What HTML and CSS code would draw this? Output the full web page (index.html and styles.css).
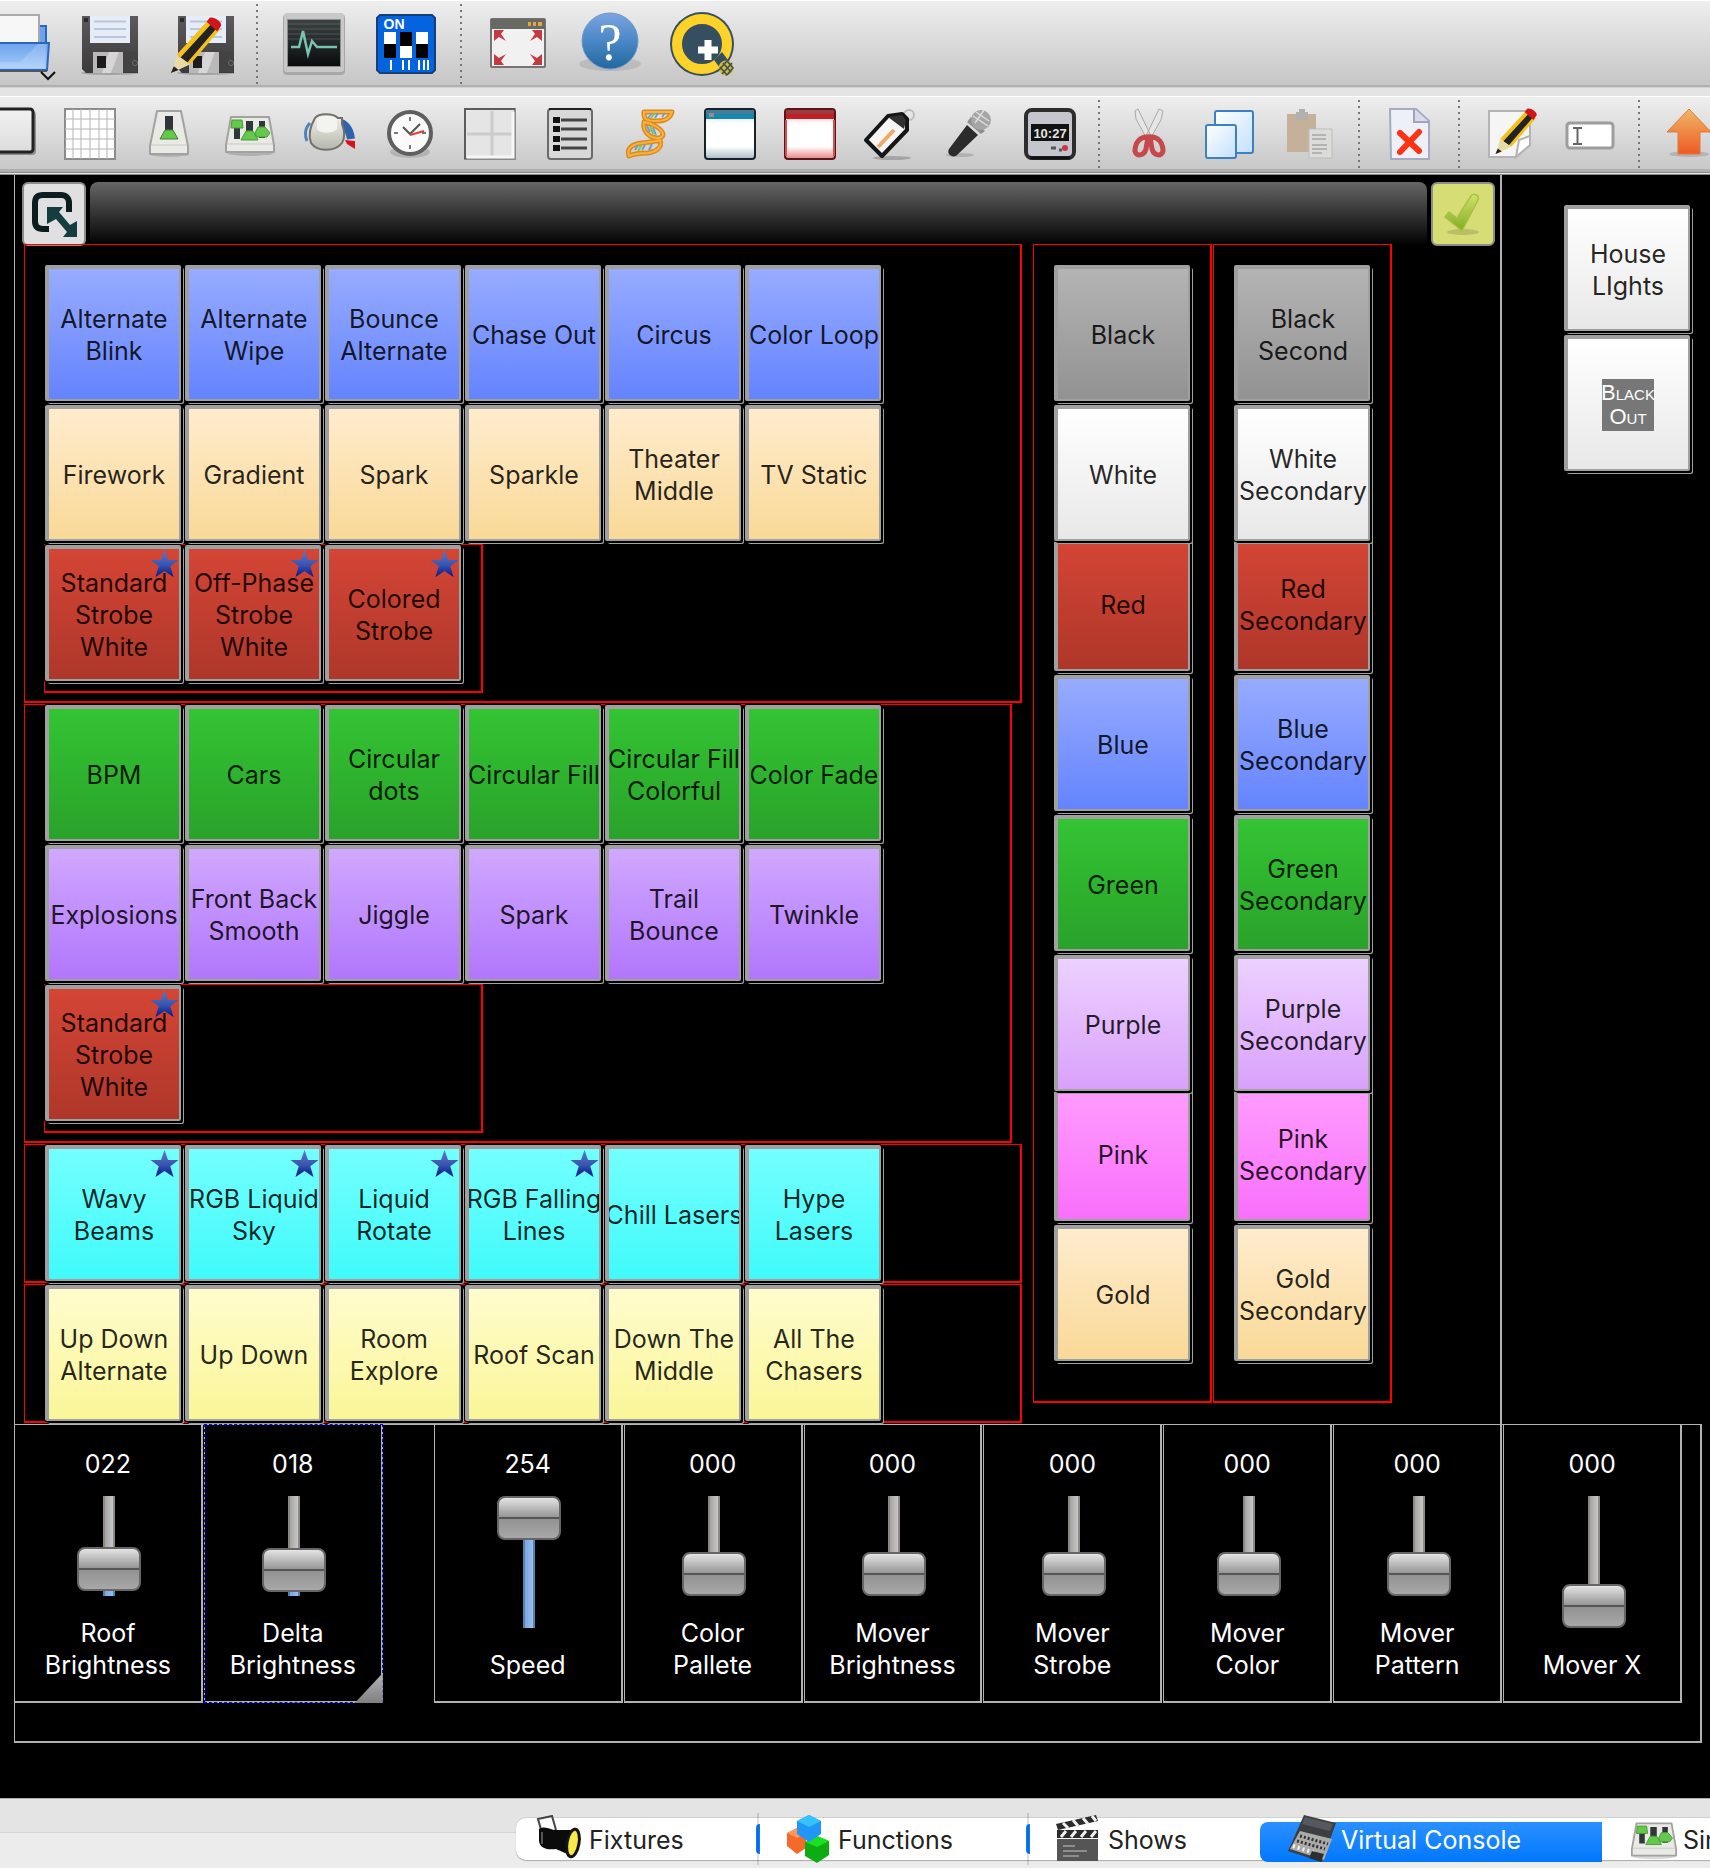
FILE: index.html
```html
<!DOCTYPE html>
<html lang="en">
<head>
<meta charset="utf-8">
<meta name="viewport" content="width=device-width, initial-scale=1">
<title>Virtual Console</title>
<link rel="stylesheet" href="styles.css">
</head>
<body>
<svg class="defs" aria-hidden="true">
  <defs>
    <linearGradient id="g-star" x1="0" y1="0" x2="0" y2="1"><stop offset="0" stop-color="#5b78cc"/><stop offset=".55" stop-color="#3a55b0"/><stop offset="1" stop-color="#00168a"/></linearGradient>
    <linearGradient id="g-dark" x1="0" y1="0" x2="0" y2="1"><stop offset="0" stop-color="#5c5a5c"/><stop offset="1" stop-color="#3c393b"/></linearGradient>
    <linearGradient id="g-folder" x1="0" y1="0" x2="0" y2="1"><stop offset="0" stop-color="#6ea2ec"/><stop offset="1" stop-color="#a4cdfb"/></linearGradient>
    <linearGradient id="g-help" x1="0" y1="0" x2="0" y2="1"><stop offset="0" stop-color="#7ba4e2"/><stop offset=".5" stop-color="#4a87c6"/><stop offset="1" stop-color="#22689f"/></linearGradient>
    <linearGradient id="g-up" x1="0" y1="0" x2="0" y2="1"><stop offset="0" stop-color="#efb766"/><stop offset="1" stop-color="#ee5a24"/></linearGradient>
    <linearGradient id="g-sheet" x1="0" y1="0" x2="1" y2="1"><stop offset="0" stop-color="#fff"/><stop offset="1" stop-color="#c3e0ff"/></linearGradient>
    <linearGradient id="g-knob" x1="0" y1="0" x2="0" y2="1"><stop offset="0" stop-color="#f4f4f0"/><stop offset="1" stop-color="#b4b7aa"/></linearGradient>
    <linearGradient id="g-screen" x1="0" y1="0" x2="0" y2="1"><stop offset="0" stop-color="#3c4242"/><stop offset="1" stop-color="#090c0c"/></linearGradient>
    <linearGradient id="g-check" x1="0" y1="0" x2="0" y2="1"><stop offset="0" stop-color="#cfe36a"/><stop offset="1" stop-color="#7fae1f"/></linearGradient>
    <linearGradient id="g-face" x1="0" y1="0" x2="0" y2="1"><stop offset="0" stop-color="#f2f2f2"/><stop offset="1" stop-color="#dcdcdc"/></linearGradient>
    <linearGradient id="g-win" x1="0" y1="0" x2="0" y2="1"><stop offset="0" stop-color="#c9d2d8"/><stop offset=".3" stop-color="#fff"/><stop offset=".75" stop-color="#fff"/><stop offset="1" stop-color="#aab9c2"/></linearGradient>
    <linearGradient id="g-winred" x1="0" y1="0" x2="0" y2="1"><stop offset="0" stop-color="#f3a7a7"/><stop offset=".3" stop-color="#fff"/><stop offset=".75" stop-color="#fff"/><stop offset="1" stop-color="#e78383"/></linearGradient>
    <symbol id="star" viewBox="0 0 28 28"><path d="M14.500 0 18 10h10.500l-8.200 6.300L23.500 27l-9-6-9 6 3.200-10.700L.5 10H11z" fill="url(#g-star)"/></symbol>
    <symbol id="floppy" viewBox="0 0 64 64">
      <ellipse cx="32" cy="61" rx="29" ry="2" fill="#00000033"/>
      <path d="M4 4h56v57H8l-4-4z" fill="url(#g-dark)"/>
      <rect x="6" y="6" width="4" height="4" fill="#2c2a2b"/>
      <rect x="12" y="4" width="40" height="27" fill="#e6edf6"/>
      <path d="M16 9.500h32M16 17h32M16 25h32" stroke="#b5c8de" stroke-width="2"/>
      <rect x="15" y="40" width="30" height="21" fill="#b9b9b9"/>
      <path d="M31 40h10L33 61h-9z" fill="#d6d6d6"/>
      <rect x="19" y="44" width="9" height="12" fill="#1d1b1c"/>
      <path d="M45 40h14v20H45z" fill="#454244"/>
      <circle cx="57" cy="51" r="2.500" fill="none" stroke="#6b696a"/>
    </symbol>
    <symbol id="pencil" viewBox="0 0 52 58">
      <path d="M38 4 51 13 20 49 6 39z" fill="#f2c11c"/>
      <path d="M42 7 48 11 17 47 10 42z" fill="#232323"/>
      <path d="M37 5 40 1c4-2 13 4 12 8l-4 6z" fill="#d1161b"/>
      <path d="M6 39 20 49 1 58z" fill="#e9d9a4"/>
      <path d="M3 51 8 55 0 58z" fill="#26221c"/>
    </symbol>
    <symbol id="mixer" viewBox="0 0 52 52">
      <ellipse cx="26" cy="45" rx="23" ry="3" fill="#00000026"/>
      <path d="M7 9h38l5 28v7H2v-7z" fill="#e9e9e6" stroke="#a2a29f" stroke-width="2" stroke-linejoin="round"/>
      <path d="M3 36h46" stroke="#c9c9c6"/>
      <path d="M10 14h6v17h-6zM22 13h7v18h-7zM35 13h6v17h-6z" fill="#30363a"/>
      <path d="M8 12h10l1 8H7zM22 23h7l5 9H17zM34 19h7l5 6-3 4H33l-2-4z" fill="#62c94a" stroke="#4a9c38"/>
    </symbol>
  </defs>
</svg>

<header class="toolbar toolbar-main" role="toolbar" aria-label="Main">
  <button class="tool" aria-label="Open">
    <svg class="icon" viewBox="0 0 64 64">
      <path d="M30 14h30v17H30z" fill="#6ca3ee" stroke="#2b66bd" stroke-width="2"/>
      <path d="M-6 3h59v28H-6z" fill="#f7f7f7" stroke="#a9a9a9" stroke-width="2"/>
      <path d="M-6 31h69l-2 27H-6z" fill="url(#g-folder)" stroke="#2a66c0" stroke-width="2"/>
      <path d="M14 50h20L52 32h8l-1 24H0z" fill="#ffffff2b"/>
      <path d="M-6 59h67" stroke="#4c5766" stroke-width="2"/>
      <path d="m55 60 7 7 7-7" fill="none" stroke="#111" stroke-width="2"/>
    </svg>
  </button>
  <button class="tool" aria-label="Save"><svg class="icon"><use href="#floppy"/></svg></button>
  <button class="tool" aria-label="Save as">
    <svg class="icon" viewBox="0 0 64 64"><use href="#floppy" x="4" width="64" height="64"/><use href="#pencil" x="0" y="5" width="52" height="56"/></svg>
  </button>
  <span class="separator"></span>
  <button class="tool" aria-label="DMX monitor">
    <svg class="icon" viewBox="0 0 64 64">
      <rect x="1" y="2" width="62" height="61" rx="4" fill="#a8a8a8"/>
      <rect x="2" y="1" width="60" height="59" rx="3" fill="#c8c8c8"/>
      <rect x="5" y="7" width="54" height="48" fill="#8c8c8c"/>
      <rect x="6" y="8" width="52" height="46" fill="url(#g-screen)"/>
      <path d="M6 12h52M6 17h52M6 22h52M6 27h52" stroke="#ffffff14" stroke-width="2"/>
      <path d="M9 35h8l4-16 5 23 4-13 5 6h20" fill="none" stroke="#79c3ae" stroke-width="2.500"/>
    </svg>
  </button>
  <button class="tool" aria-label="DMX address tool">
    <svg class="icon" viewBox="0 0 64 64">
      <path d="M6 3h52l3 3v52l-3 3H6l-3-3V6z" fill="#0464e0" stroke="#173f77" stroke-width="2"/>
      <text x="20" y="17" class="dip-label" text-anchor="middle">ON</text>
      <path d="M10 20h12v12H10zM26 34h12v12H26zM42 20h12v12H42z" fill="#fff"/>
      <path d="M10 32h12v14H10zM26 20h12v14H26zM42 32h12v14H42z" fill="#000"/>
      <path d="M17 48v10M29 48v10M35 48v10M45 48v10M50 48v10M54 48v10" stroke="#fff" stroke-width="2"/>
    </svg>
  </button>
  <span class="separator"></span>
  <button class="tool" aria-label="Full screen">
    <svg class="icon" viewBox="0 0 64 64">
      <rect x="5" y="7" width="54" height="48" rx="1" fill="#f1f1f1" stroke="#747470" stroke-width="2"/>
      <path d="M5 7h54v10H5z" fill="#686864"/>
      <path d="M42 12h3M47 12h3M52 12h4" stroke="#e9a63c" stroke-width="4"/>
      <g fill="#c23b40"><path d="M8 18h10l-3 4 5 7-7-4-5 4z"/><path d="M56 18H46l3 4-5 7 7-4 5 4z"/><path d="M8 53h10l-3-4 5-7-7 4-5-4z"/><path d="M56 53H46l3-4-5-7 7 4 5-4z"/></g>
    </svg>
  </button>
  <button class="tool" aria-label="Help">
    <svg class="icon" viewBox="0 0 64 64">
      <ellipse cx="32" cy="52" rx="31" ry="7" fill="#00000018"/>
      <circle cx="32" cy="29" r="28" fill="url(#g-help)" stroke="#6f97c8"/>
      <text x="32" y="48" class="help-mark" text-anchor="middle">?</text>
    </svg>
  </button>
  <button class="tool" aria-label="About">
    <svg class="icon" viewBox="0 0 64 64">
      <circle cx="32" cy="32" r="32" fill="#354f60"/>
      <circle cx="32" cy="32" r="25" fill="none" stroke="#fdd32a" stroke-width="10"/>
      <path d="m44 48 8-8 12 16-8 8z" fill="#354f60"/>
      <path d="M38 28v20M28 38h20" stroke="#fff" stroke-width="7"/>
      <circle cx="56" cy="56" r="7.500" fill="#d9b92b"/>
      <path d="m50 55 7 8M53 51l8 9M57 49l6 7M49 58l8-9M52 62l10-11M57 63l6-7" stroke="#354f60" stroke-width="1.500"/>
    </svg>
  </button>
</header>

<div class="toolbar toolbar-widgets" role="toolbar" aria-label="Widgets">
  <button class="tool" aria-label="Add button"><svg class="icon" viewBox="0 0 52 52"><rect x="-2" y="3" width="54" height="44" rx="4" fill="#00000055"/><rect x="-4" y="1" width="53" height="43" rx="3" fill="url(#g-face)" stroke="#222" stroke-width="3"/></svg></button>
  <button class="tool" aria-label="Add button matrix"><svg class="icon" viewBox="0 0 52 52"><rect x="1" y="1" width="50" height="50" fill="#fff" stroke="#8c8c8c" stroke-width="2"/><path d="M9 1v50M17 1v50M26 1v50M35 1v50M43 1v50M1 11h50M1 21h50M1 31h50M1 41h50" stroke="#b4b4b4"/></svg></button>
  <button class="tool" aria-label="Add slider"><svg class="icon" viewBox="0 0 52 52"><ellipse cx="25" cy="46" rx="20" ry="3" fill="#00000026"/><path d="M13 3h24l7 35v8H6v-8z" fill="#e9e9e6" stroke="#a2a29f" stroke-width="2" stroke-linejoin="round"/><path d="M7 37h36" stroke="#c9c9c6"/><rect x="21" y="8" width="8" height="16" fill="#30343a"/><path d="M21 22h8l5 9H16z" fill="#62c94a" stroke="#4a7a40"/></svg></button>
  <button class="tool" aria-label="Add slider matrix"><svg class="icon"><use href="#mixer"/></svg></button>
  <button class="tool" aria-label="Add knob"><svg class="icon" viewBox="0 0 52 52"><path d="M6 15c-6 6-5 14-3 18" fill="none" stroke="#4d83bd" stroke-width="3"/><path d="M34 14c8 2 12 9 13 17" fill="none" stroke="#2f64ad" stroke-width="8"/><path d="m41 32 10 1v8l-8-5z" fill="#d6141a"/><path d="M11 10c4-5 18-5 23 0h4v6c3 8 3 14 0 19-7 9-25 9-31 0-3-8 0-18 4-25z" fill="url(#g-knob)" stroke="#6f716a" stroke-width="2"/><path d="M13 11c5-4 15-4 20 0v10c-4 5-17 5-20 0z" fill="#f3f3ef"/></svg></button>
  <button class="tool" aria-label="Add speed dial"><svg class="icon" viewBox="0 0 52 52"><ellipse cx="26" cy="44" rx="20" ry="6" fill="#00000022"/><circle cx="26" cy="25" r="21" fill="#fafafa" stroke="#5f5f5f" stroke-width="4"/><path d="M26 9v4M26 37v4M10 25h4M38 25h4" stroke="#777" stroke-width="2"/><path d="m19 19 7 7 10-10" fill="none" stroke="#555" stroke-width="2"/><path d="m26 27 14-4" stroke="#e43b3b" stroke-width="2"/></svg></button>
  <button class="tool" aria-label="Add XY pad"><svg class="icon" viewBox="0 0 52 52"><rect x="1" y="1" width="50" height="50" fill="#e5e5e5" stroke="#8a8a8a" stroke-width="2"/><path d="M1 51V1h50" fill="none" stroke="#5c5c5c" stroke-width="2"/><path d="M28 3v47M3 26h47" stroke="#cbcbcb" stroke-width="3"/><path d="M3 49h46V4" fill="none" stroke="#f7f7f7" stroke-width="3"/></svg></button>
  <button class="tool" aria-label="Add cue list"><svg class="icon" viewBox="0 0 52 52"><rect x="4" y="1" width="44" height="50" rx="3" fill="#d8d8d8" stroke="#6b6b6b" stroke-width="2"/><path d="M5 1h42" stroke="#222" stroke-width="2"/><path d="M9 12h7M9 21h7M9 31h7M9 40h7" stroke="#111" stroke-width="6"/><path d="M17 12h26M17 21h26M17 31h26M17 40h26" stroke="#444" stroke-width="3"/></svg></button>
  <button class="tool" aria-label="Add animation"><svg class="icon" viewBox="0 0 52 52"><g fill="none" stroke-linejoin="round"><path d="M20 4h28c-2 7-9 9-15 9-9 0-14-1-13-9zM20 14c8 1 18 7 19 12 0 5-8 5-13 2-6-4-7-8-6-14zM5 48c-3-9 5-12 13-13 7-1 12-1 18-3 3 8-5 12-12 13-7 0-12 0-19 3z" stroke="#dd8a1b" stroke-width="5"/><path d="M20 4h28c-2 7-9 9-15 9-9 0-14-1-13-9zM20 14c8 1 18 7 19 12 0 5-8 5-13 2-6-4-7-8-6-14zM5 48c-3-9 5-12 13-13 7-1 12-1 18-3 3 8-5 12-12 13-7 0-12 0-19 3z" stroke="#f7b244" stroke-width="2"/><path d="m24 10 4-5M31 10l3-5M38 9l3-4M23 18l3 6M29 20l3 7M11 42l3-5M18 42l3-5M25 42l3-6" stroke="#6c9fd0" stroke-width="2"/><path d="m27 10 4-5M26 18l3 8M14 43l4-7" stroke="#8fbf4a" stroke-width="2"/></g></svg></button>
  <button class="tool" aria-label="Add frame"><svg class="icon" viewBox="0 0 52 52"><rect x="1" y="1" width="50" height="50" rx="3" fill="url(#g-win)" stroke="#16232b" stroke-width="2"/><path d="M2 2h48v9H2z" fill="#1687ad"/><path d="M2 2h48v4H2z" fill="#457d98"/><path d="M5 7h5" stroke="#8f8f8f" stroke-width="4"/></svg></button>
  <button class="tool" aria-label="Add solo frame"><svg class="icon" viewBox="0 0 52 52"><rect x="1" y="1" width="50" height="50" rx="3" fill="url(#g-winred)" stroke="#5a1518" stroke-width="2"/><path d="M2 2h48v9H2z" fill="#c01f23"/><path d="M2 2h48v4H2z" fill="#9c3a3d"/><path d="M2 12v36M50 12v36" stroke="#d64f4f" stroke-width="2"/></svg></button>
  <button class="tool" aria-label="Add label"><svg class="icon" viewBox="0 0 52 52"><ellipse cx="28" cy="50" rx="19" ry="2" fill="#00000033"/><circle cx="45" cy="7" r="5" fill="none" stroke="#bdbdbd" stroke-width="2"/><path d="M2 32 24 8l14-2 5 5v11L18 48z" fill="#f6f6f6" stroke="#151515" stroke-width="4" stroke-linejoin="round"/><path d="m24 9 14-2 4 5-2 9z" fill="#303030"/><path d="M14 39 30 22" stroke="#f3a767" stroke-width="4"/></svg></button>
  <button class="tool" aria-label="Add audio triggers"><svg class="icon" viewBox="0 0 52 52"><ellipse cx="16" cy="47" rx="14" ry="2" fill="#00000026"/><path d="m23 17 11 10L13 47c-4 4-11-1-8-6z" fill="#2b2b2b"/><path d="m23 14 14 12 4-3-14-14z" fill="#8e8e8e"/><circle cx="37" cy="12" r="10" fill="#a6a6a6"/><path d="m29 8 15 10M32 4l13 9M31 15l9-13" stroke="#dcdcdc" stroke-width="1.500"/></svg></button>
  <button class="tool" aria-label="Add clock"><svg class="icon" viewBox="0 0 52 52"><rect x="2" y="2" width="48" height="48" rx="6" fill="#c3c6cd" stroke="#2d2d2f" stroke-width="4"/><path d="M6 50h40" stroke="#111" stroke-width="3"/><rect x="7" y="16" width="38" height="17" fill="#121212"/><text x="26" y="30" class="clock-digits" text-anchor="middle">10:27</text><path d="M27 40h5M35 42h3" stroke="#555" stroke-width="3"/><circle cx="41" cy="40" r="3" fill="#d63246"/></svg></button>
  <span class="separator"></span>
  <button class="tool" aria-label="Cut"><svg class="icon" viewBox="0 0 52 52"><path d="m14 1-3 2 1 8 11 20 4-3zM35 1l4 2-2 9-11 19-4-3z" fill="#e6e6e2" stroke="#a9a9a3"/><g fill="none" stroke="#c5494b" stroke-width="5"><path d="M24 29c-8-1-13 6-13 14 1 6 9 5 11-2z"/><path d="M26 29c8-1 13 6 13 14-1 6-9 5-11-2z"/></g></svg></button>
  <button class="tool" aria-label="Copy"><svg class="icon" viewBox="0 0 52 52"><rect x="11" y="3" width="38" height="42" rx="2" fill="url(#g-sheet)" stroke="#3f81c0" stroke-width="2"/><rect x="2" y="17" width="30" height="33" rx="2" fill="url(#g-sheet)" stroke="#3f81c0" stroke-width="2"/></svg></button>
  <button class="tool" aria-label="Paste" disabled><svg class="icon" viewBox="0 0 52 52"><rect x="3" y="6" width="29" height="38" fill="#c5b09a"/><path d="M12 4h3V1h6v3h3v8H12z" fill="#b1b1ae"/><path d="M25 21h23v29H25z" fill="#dcdcda" stroke="#bdbdbb"/><path d="M28 27h14M28 31h14M28 37h15M28 41h15M28 45h10" stroke="#b3b3b1" stroke-width="2"/></svg></button>
  <span class="separator"></span>
  <button class="tool" aria-label="Delete"><svg class="icon" viewBox="0 0 52 52"><path d="M6 1h26l13 12v38H7z" fill="#eef0f8" stroke="#a7abc2" stroke-width="2"/><path d="M30 1v13h15" fill="#d8dcea" stroke="#9ea3bd" stroke-width="2"/><path d="m16 25 19 18M35 24 16 44" stroke="#fb3314" stroke-width="6" stroke-linecap="round"/></svg></button>
  <span class="separator"></span>
  <button class="tool" aria-label="Edit"><svg class="icon" viewBox="0 0 52 52"><path d="M5 3h41v34L32 49H5z" fill="#f5f5f5" stroke="#b4b4b4" stroke-width="2"/><path d="m32 49 3-17 11-4v9z" fill="#fff" stroke="#b4b4b4" stroke-width="2"/><use href="#pencil" x="11" y="0" width="42" height="46"/></svg></button>
  <button class="tool" aria-label="Rename"><svg class="icon" viewBox="0 0 52 52"><rect x="3" y="15" width="46" height="25" rx="3" fill="#fff" stroke="#9d9d9b" stroke-width="3"/><path d="M9 20h9M9 36h9M13.500 20v16" fill="none" stroke="#666" stroke-width="2"/></svg></button>
  <span class="separator"></span>
  <button class="tool" aria-label="Raise"><svg class="icon" viewBox="0 0 52 52"><ellipse cx="25" cy="46" rx="20" ry="3" fill="#00000022"/><path d="M25 1 47 24H36v22H14V24H3z" fill="url(#g-up)" stroke="#dd7a3a"/></svg></button>
</div>

<main class="console">
  <div class="console-top">
    <section class="frame frame-main" aria-label="Looks">
      <div class="frame-header">
        <button class="frame-button" aria-label="Collapse frame"><svg class="header-icon" viewBox="0 0 48 48"><path d="M19 39h-6c-6 0-8-3-8-8V13c0-6 3-8 8-8h18c5 0 8 3 8 8v9" fill="none" stroke="#0b1d1f" stroke-width="6"/><path d="M17 17h16l-4 5 11 13 7-4v16H33l4-5-11-13-9 5z" fill="#143d40"/></svg></button>
        <div class="frame-title"></div>
        <button class="frame-button frame-enable" aria-label="Enable frame"><svg class="header-icon" viewBox="0 0 48 48"><ellipse cx="24" cy="42" rx="16" ry="3" fill="#00000022"/><path d="m6 27 4-5 8 6L32 6c3-4 9 0 7 4L23 41z" fill="url(#g-check)" stroke="#a9bf4a" stroke-width="1.500" stroke-linejoin="round"/></svg></button>
      </div>
      <div class="frame-body">
        <div class="groups">
          <section class="solo solo-inset">
            <div class="pad-row">
              <button class="pad blue">Alternate<br>Blink</button>
              <button class="pad blue">Alternate<br>Wipe</button>
              <button class="pad blue">Bounce<br>Alternate</button>
              <button class="pad blue">Chase Out</button>
              <button class="pad blue">Circus</button>
              <button class="pad blue">Color Loop</button>
            </div>
            <div class="pad-row">
              <button class="pad peach">Firework</button>
              <button class="pad peach">Gradient</button>
              <button class="pad peach">Spark</button>
              <button class="pad peach">Sparkle</button>
              <button class="pad peach">Theater<br>Middle</button>
              <button class="pad peach">TV Static</button>
            </div>
            <div class="solo-nested">
              <button class="pad red"><svg class="star"><use href="#star"/></svg>Standard<br>Strobe<br>White</button>
              <button class="pad red"><svg class="star"><use href="#star"/></svg>Off-Phase<br>Strobe<br>White</button>
              <button class="pad red"><svg class="star"><use href="#star"/></svg>Colored<br>Strobe</button>
            </div>
          </section>
          <section class="solo solo-narrow">
            <div class="pad-row">
              <button class="pad green">BPM</button>
              <button class="pad green">Cars</button>
              <button class="pad green">Circular<br>dots</button>
              <button class="pad green">Circular Fill</button>
              <button class="pad green">Circular Fill<br>Colorful</button>
              <button class="pad green">Color Fade</button>
            </div>
            <div class="pad-row">
              <button class="pad violet">Explosions</button>
              <button class="pad violet">Front Back<br>Smooth</button>
              <button class="pad violet">Jiggle</button>
              <button class="pad violet">Spark</button>
              <button class="pad violet">Trail<br>Bounce</button>
              <button class="pad violet">Twinkle</button>
            </div>
            <div class="solo-nested">
              <button class="pad red"><svg class="star"><use href="#star"/></svg>Standard<br>Strobe<br>White</button>
            </div>
          </section>
          <section class="solo solo-single">
            <div class="pad-row">
              <button class="pad cyan"><svg class="star"><use href="#star"/></svg>Wavy<br>Beams</button>
              <button class="pad cyan"><svg class="star"><use href="#star"/></svg>RGB Liquid<br>Sky</button>
              <button class="pad cyan"><svg class="star"><use href="#star"/></svg>Liquid<br>Rotate</button>
              <button class="pad cyan"><svg class="star"><use href="#star"/></svg>RGB Falling<br>Lines</button>
              <button class="pad cyan">Chill Lasers</button>
              <button class="pad cyan">Hype<br>Lasers</button>
            </div>
          </section>
          <section class="solo solo-single">
            <div class="pad-row">
              <button class="pad yellow">Up Down<br>Alternate</button>
              <button class="pad yellow">Up Down</button>
              <button class="pad yellow">Room<br>Explore</button>
              <button class="pad yellow">Roof Scan</button>
              <button class="pad yellow">Down The<br>Middle</button>
              <button class="pad yellow">All The<br>Chasers</button>
            </div>
          </section>
        </div>
        <section class="solo solo-column" aria-label="Primary color">
          <button class="pad gray">Black</button>
          <button class="pad white over">White</button>
          <button class="pad red tucked">Red</button>
          <button class="pad blue">Blue</button>
          <button class="pad green">Green</button>
          <button class="pad lilac over">Purple</button>
          <button class="pad pink tucked">Pink</button>
          <button class="pad peach">Gold</button>
        </section>
        <section class="solo solo-column" aria-label="Secondary color">
          <button class="pad gray">Black<br>Second</button>
          <button class="pad white over">White<br>Secondary</button>
          <button class="pad red tucked">Red<br>Secondary</button>
          <button class="pad blue">Blue<br>Secondary</button>
          <button class="pad green">Green<br>Secondary</button>
          <button class="pad lilac over">Purple<br>Secondary</button>
          <button class="pad pink tucked">Pink<br>Secondary</button>
          <button class="pad peach">Gold<br>Secondary</button>
        </section>
      </div>
    </section>
    <aside class="house">
      <button class="pad white house-lights">House<br>LIghts</button>
      <button class="pad white"><span class="blackout"><span>Black</span><span>Out</span></span></button>
    </aside>
  </div>

  <section class="frame frame-faders" aria-label="Faders">
    <div class="faders">
      <div class="fader"><output class="value">022</output><input id="f1" class="range" type="range" min="0" max="255" value="22" style="--level:20%"><label for="f1">Roof<br>Brightness</label></div>
      <div class="fader selected"><output class="value">018</output><input id="f2" class="range" type="range" min="0" max="255" value="18" style="--level:20%"><label for="f2">Delta<br>Brightness</label><span class="grip"></span></div>
      <div class="fader-gap"></div>
      <div class="fader"><output class="value">254</output><input id="f3" class="range" type="range" min="0" max="255" value="254" style="--level:80%"><label for="f3">Speed</label></div>
      <div class="fader"><output class="value">000</output><input id="f4" class="range" type="range" min="0" max="255" value="0" style="--level:0%"><label for="f4">Color<br>Pallete</label></div>
      <div class="fader"><output class="value">000</output><input id="f5" class="range" type="range" min="0" max="255" value="0" style="--level:0%"><label for="f5">Mover<br>Brightness</label></div>
      <div class="fader"><output class="value">000</output><input id="f6" class="range" type="range" min="0" max="255" value="0" style="--level:0%"><label for="f6">Mover<br>Strobe</label></div>
      <div class="fader"><output class="value">000</output><input id="f7" class="range" type="range" min="0" max="255" value="0" style="--level:0%"><label for="f7">Mover<br>Color</label></div>
      <div class="fader"><output class="value">000</output><input id="f8" class="range" type="range" min="0" max="255" value="0" style="--level:0%"><label for="f8">Mover<br>Pattern</label></div>
      <div class="fader"><output class="value">000</output><input id="f9" class="range" type="range" min="0" max="255" value="0" style="--level:0%"><label for="f9">Mover X</label></div>
    </div>
  </section>
</main>

<footer class="tabbar">
  <div class="tabs" role="tablist">
    <button class="tab tab-fixtures" role="tab"><svg class="tab-icon" viewBox="0 0 48 48"><path d="m6 18-4-14 14-3 4 14" fill="none" stroke="#444" stroke-width="2"/><path d="M3 14c7-4 11 1 17 1l18 0 4 16-4 11-18-8c-8 1-16 0-17-8z" fill="#0b0b0b"/><path d="M6 17v12" stroke="#555" stroke-width="2"/><ellipse cx="37" cy="28" rx="6" ry="14" fill="#f8e94d" stroke="#15130a" stroke-width="3" transform="rotate(10 37 28)"/></svg>Fixtures</button>
    <button class="tab tab-functions" role="tab"><svg class="tab-icon" viewBox="0 0 48 48"><path d="m2 18 10-5 9 6v14l-9 6-10-8z" fill="#f5692a"/><path d="m2 18 10-5 9 6-9 4z" fill="#ff965a"/><path d="m20 27 12-6 12 5v14l-12 8-12-7z" fill="#0dac12"/><path d="m20 27 12-6 12 5-12 6z" fill="#1be021"/><path d="m12 6 12-6 12 6v13l-12 8-12-8z" fill="#2196f6"/><path d="m12 6 12-6 12 6-12 6z" fill="#36c2ff"/></svg>Functions</button>
    <button class="tab tab-shows" role="tab"><svg class="tab-icon" viewBox="0 0 48 48"><path d="M2 24h41v22H2z" fill="#555"/><path d="M2 15h41v8H2z" fill="#2c2c2c"/><path d="M1 9 41 0l2 6L3 15z" fill="#2c2c2c"/><path d="m8 8 5 5M18 5l5 6M28 3l5 6M37 1l4 5M6 22l5-6M16 22l5-6M26 22l5-6M36 22l5-6" stroke="#f1f1f1" stroke-width="3"/><path d="M8 31h12M8 36h24M8 41h16" stroke="#8d8d8d" stroke-width="2"/></svg>Shows</button>
    <button class="tab tab-console" role="tab" aria-selected="true"><svg class="tab-icon" viewBox="0 0 48 48"><path d="M16 0 48 8 34 47 0 36z" fill="#3c3f42"/><path d="M12 16 44 24 36 45 2 34z" fill="#a9aba8"/><path d="m17 2 28 7-3 7-28-7z" fill="#55595d"/><path d="m12 21 28 8M9 26l28 8" stroke="#333" stroke-width="3" stroke-dasharray="2 2"/><path d="m5 31 22 7" stroke="#f2f2f2" stroke-width="4" stroke-dasharray="2 3"/><path d="m24 36 12 3-3 8-12-4z" fill="#2d2f31"/></svg>Virtual Console</button>
    <button class="tab tab-desk" role="tab"><svg class="tab-icon"><use href="#mixer"/></svg>Simple Desk</button>
  </div>
</footer>
</body>
</html>
```
FILE: styles.css
```css
*,
*::before,
*::after {
  box-sizing: border-box;
}

:root {
  --line: #b2b2b2;
  --rim: #a0a0a0;
  --solo: #ff0000;
  --pad: 136px;
}

body {
  margin: 0;
  min-height: 100vh;
  display: flex;
  flex-direction: column;
  overflow-x: hidden;
  background: #000;
  font-family: Inter, "Liberation Sans", sans-serif;
  font-size: 25px;
  line-height: 32px;
}

button {
  font: inherit;
  margin: 0;
  padding: 0;
  border: 0;
  background: none;
}

.defs {
  position: absolute;
  width: 0;
  height: 0;
}

/* Toolbars */

.toolbar {
  display: flex;
  flex: none;
  overflow: hidden;
  border-top: 1px solid #fff;
}

.toolbar-main {
  height: 88px;
  padding-top: 11px;
  background: linear-gradient(#eeeeee, #c6c6c6 84px, #b0b0b0 84px, #b0b0b0 86px, #d2d2d2 86px);
}

.toolbar-widgets {
  height: 79px;
  margin-top: 8px;
  padding-top: 11px;
  background: linear-gradient(#eeeeee, #c8c8c8 72px, #b0b0b0 72px, #b0b0b0 75px, #888 75px, #888 76px, #e8e8e8 76px, #e8e8e8 77px, #8a8a8a 77px);
  box-shadow: 0 -8px 0 #e4e4e4;
}

.tool {
  flex: none;
  width: 92px;
  height: 64px;
  display: flex;
  justify-content: center;
}

.toolbar-main .tool:first-child {
  margin-left: -28px;
}

.toolbar-widgets .tool {
  width: 80px;
  height: 52px;
}

.toolbar-widgets .tool:first-child {
  margin-left: -30px;
}

.icon {
  width: 64px;
  height: 64px;
  overflow: visible;
}

.toolbar-widgets .icon {
  width: 52px;
  height: 52px;
}

.separator {
  flex: none;
  width: 20px;
  height: 80px;
  margin-top: -8px;
  background: repeating-linear-gradient(#777 0 2px, transparent 2px 6px) 8px 0 / 2px 100% no-repeat;
}

.toolbar-widgets .separator {
  height: 68px;
}

.dip-label {
  font: 700 14px "Liberation Sans", sans-serif;
  fill: #fff;
}

.help-mark {
  font: 52px "Liberation Serif", serif;
  fill: #fff;
}

.clock-digits {
  font: 700 13px "Liberation Sans", sans-serif;
  fill: #e4e4e4;
}

/* Console */

.console {
  flex: 1;
  padding: 0 8px 55px 14px;
}

.console-top {
  display: flex;
}

.frame {
  border: 1px solid var(--line);
  border-right-width: 2px;
}

.frame-main {
  flex: 1;
  border-top: 0;
  border-bottom: 0;
}

.frame-header {
  display: flex;
  gap: 4px;
  padding: 7px 5px 0 7px;
}

.frame-button {
  flex: none;
  width: 64px;
  height: 64px;
  display: flex;
  align-items: center;
  justify-content: center;
  border: 2px solid #8c8c8c;
  border-radius: 6px;
  background: #e0e0e0;
}

.frame-enable {
  background: #d7dd75;
}

.header-icon {
  width: 48px;
  height: 48px;
}

.frame-title {
  flex: 1;
  border-radius: 8px;
  background: linear-gradient(#666, #000);
}

.frame-body {
  display: flex;
  align-items: flex-start;
  position: relative;
  margin-top: -2px;
  padding: 0 108px 1px 9px;
}

.groups {
  flex: 1;
  margin-right: 11px;
}

.solo,
.solo-nested {
  border: 1px solid var(--solo);
  border-right-width: 2px;
  border-bottom-width: 2px;
}

.solo {
  display: flex;
  flex-direction: column;
  gap: 4px;
  padding-left: 20px;
}

.groups .solo + .solo {
  margin-top: 1px;
}

.solo-inset {
  padding-top: 20px;
  padding-bottom: 8px;
}

.groups .solo-narrow {
  margin-right: 10px;
  padding-bottom: 8px;
}

.pad-row,
.solo-nested {
  display: flex;
  gap: 4px;
}

.solo-nested {
  width: 439px;
  margin: -1px 0 0 -1px;
  padding-bottom: 10px;
}

.solo-column {
  flex: none;
  width: 179px;
  padding: 20px 0 40px 20px;
}

.solo-column + .solo-column {
  margin-left: 1px;
}

.pad {
  position: relative;
  flex: none;
  width: var(--pad);
  height: var(--pad);
  display: flex;
  flex-direction: column;
  align-items: center;
  justify-content: center;
  overflow: hidden;
  padding-top: 2px;
  white-space: nowrap;
  text-align: center;
  border: solid var(--rim);
  border-width: 4px 2px 2px 4px;
  border-radius: 2px;
  background: linear-gradient(var(--from), var(--to)) padding-box, var(--rim);
  box-shadow: 0 0 0 1px #000, 2px 2px 0 #000, 3px 3px 0 var(--rim);
  color: rgb(0 0 0 / 86%);
}

.over {
  z-index: 1;
}

.tucked {
  margin-top: -10px;
}

.blue { --from: #97abff; --to: #6484fe; }
.peach { --from: #ffeccd; --to: #f9d997; }
.red { --from: #d44535; --to: #ae372a; }
.green { --from: #33c433; --to: #2aa22a; }
.violet { --from: #d0a8ff; --to: #b176fb; }
.cyan { --from: #74ffff; --to: #40fafa; }
.yellow { --from: #fffccd; --to: #faf698; }
.gray { --from: #b4b4b4; --to: #929292; }
.white { --from: #ffffff; --to: #e8e8e8; }
.lilac { --from: #ecd1ff; --to: #d9a1fb; }
.pink { --from: #ff9dff; --to: #f96ffa; }

.star {
  position: absolute;
  top: 1px;
  right: 1px;
  width: 28px;
  height: 28px;
}

.house {
  flex: none;
  display: flex;
  flex-direction: column;
  gap: 4px;
  width: 200px;
  padding: 30px 0 0 62px;
}

.house .pad {
  width: 126px;
}

.house .house-lights {
  height: 126px;
}

.blackout {
  display: flex;
  flex-direction: column;
  align-items: center;
  justify-content: center;
  width: 52px;
  height: 52px;
  background: #777;
  color: #fff;
  font-family: "Liberation Sans", sans-serif;
  font-size: 22px;
  line-height: 24px;
  font-variant: small-caps;
}

/* Faders */

.frame-faders {
  border-bottom-width: 2px;
  padding: 0 18px 38px 0;
}

.faders {
  display: grid;
  grid-template-columns: 189fr 179fr 49fr 189fr 179fr 179fr 179fr 169fr 169fr 179fr;
  gap: 1px;
  margin: -1px 0 0 -1px;
}

.fader {
  position: relative;
  height: 279px;
  display: flex;
  flex-direction: column;
  align-items: center;
  padding: 23px 0 20px;
  border: 1px solid var(--line);
  border-right-width: 2px;
  border-bottom-width: 2px;
  color: #fff;
  text-align: center;
}

.selected {
  outline: 1px dashed #0000ff;
  outline-offset: -1px;
}

.range {
  flex: 1;
  min-height: 0;
  width: 64px;
  margin: 16px 0 21px 3px;
  appearance: none;
  writing-mode: vertical-lr;
  direction: rtl;
  background:
    linear-gradient(to right, #4f84ab 0 2px, #7ea5e2 2px, #98bdee 10px, #4f84ab 10px) 26px 100% / 12px var(--level) no-repeat,
    linear-gradient(to right, #8d8982 0 2px, #a6a4a2 2px, #c8c8c8 10px, #8d8982 10px) 26px 0 / 12px 100% no-repeat;
}

.range::-webkit-slider-runnable-track {
  width: 64px;
  background: none;
}

.range::-webkit-slider-thumb {
  appearance: none;
  width: 64px;
  height: 44px;
  border: 2px solid #666;
  border-radius: 8px;
  background: linear-gradient(#e4e4e4, #969696 19px, #555 19px, #555 21px, #929292 21px, #a8a8a8);
}

.grip {
  position: absolute;
  right: -2px;
  bottom: -2px;
  width: 28px;
  height: 30px;
  background: linear-gradient(#b4b4b4, #808080);
  clip-path: polygon(100% 0, 100% 100%, 0 100%);
}

/* Tabs */

.tabbar {
  flex: none;
  height: 70px;
  padding: 19px 0 0 516px;
  overflow: hidden;
  border-top: 1px solid #b0b0b0;
  background: linear-gradient(#e4e4e4 33px, #d6d6d6 33px, #d6d6d6 34px, #ececec 34px);
}

.tabs {
  display: flex;
  height: 42px;
  border-radius: 10px 0 0 10px;
  background: #fff;
  box-shadow: 0 1px 1px #aaa, 0 -1px 0 #d0d0d0;
}

.tab {
  position: relative;
  flex: none;
  display: flex;
  align-items: center;
  gap: 5px;
  padding: 2px 0 0 28px;
  white-space: nowrap;
  color: #222;
}

.tab-icon {
  flex: none;
  width: 48px;
  height: 48px;
  margin: -5px 0 -3px;
}

.tab-fixtures {
  width: 241px;
  padding-left: 20px;
}

.tab-functions {
  width: 270px;
}

.tab-shows {
  width: 233px;
}

.tab-console {
  width: 342px;
  height: 40px;
  margin-top: 4px;
  padding-top: 0;
  padding-bottom: 4px;
  border-radius: 8px 0 0 8px;
  background: linear-gradient(#2b90ff, #0077ff);
  color: #fff;
}

.tab-functions::before,
.tab-shows::before {
  content: "";
  position: absolute;
  left: -1px;
  top: 6px;
  width: 4px;
  height: 30px;
  border-radius: 4px 0 0 4px;
  background: #0a7cff;
}

.tab-functions::after,
.tab-shows::after {
  content: "";
  position: absolute;
  left: 0;
  top: -5px;
  width: 2px;
  height: 52px;
  background: rgb(0 0 0 / 12%);
}
```
